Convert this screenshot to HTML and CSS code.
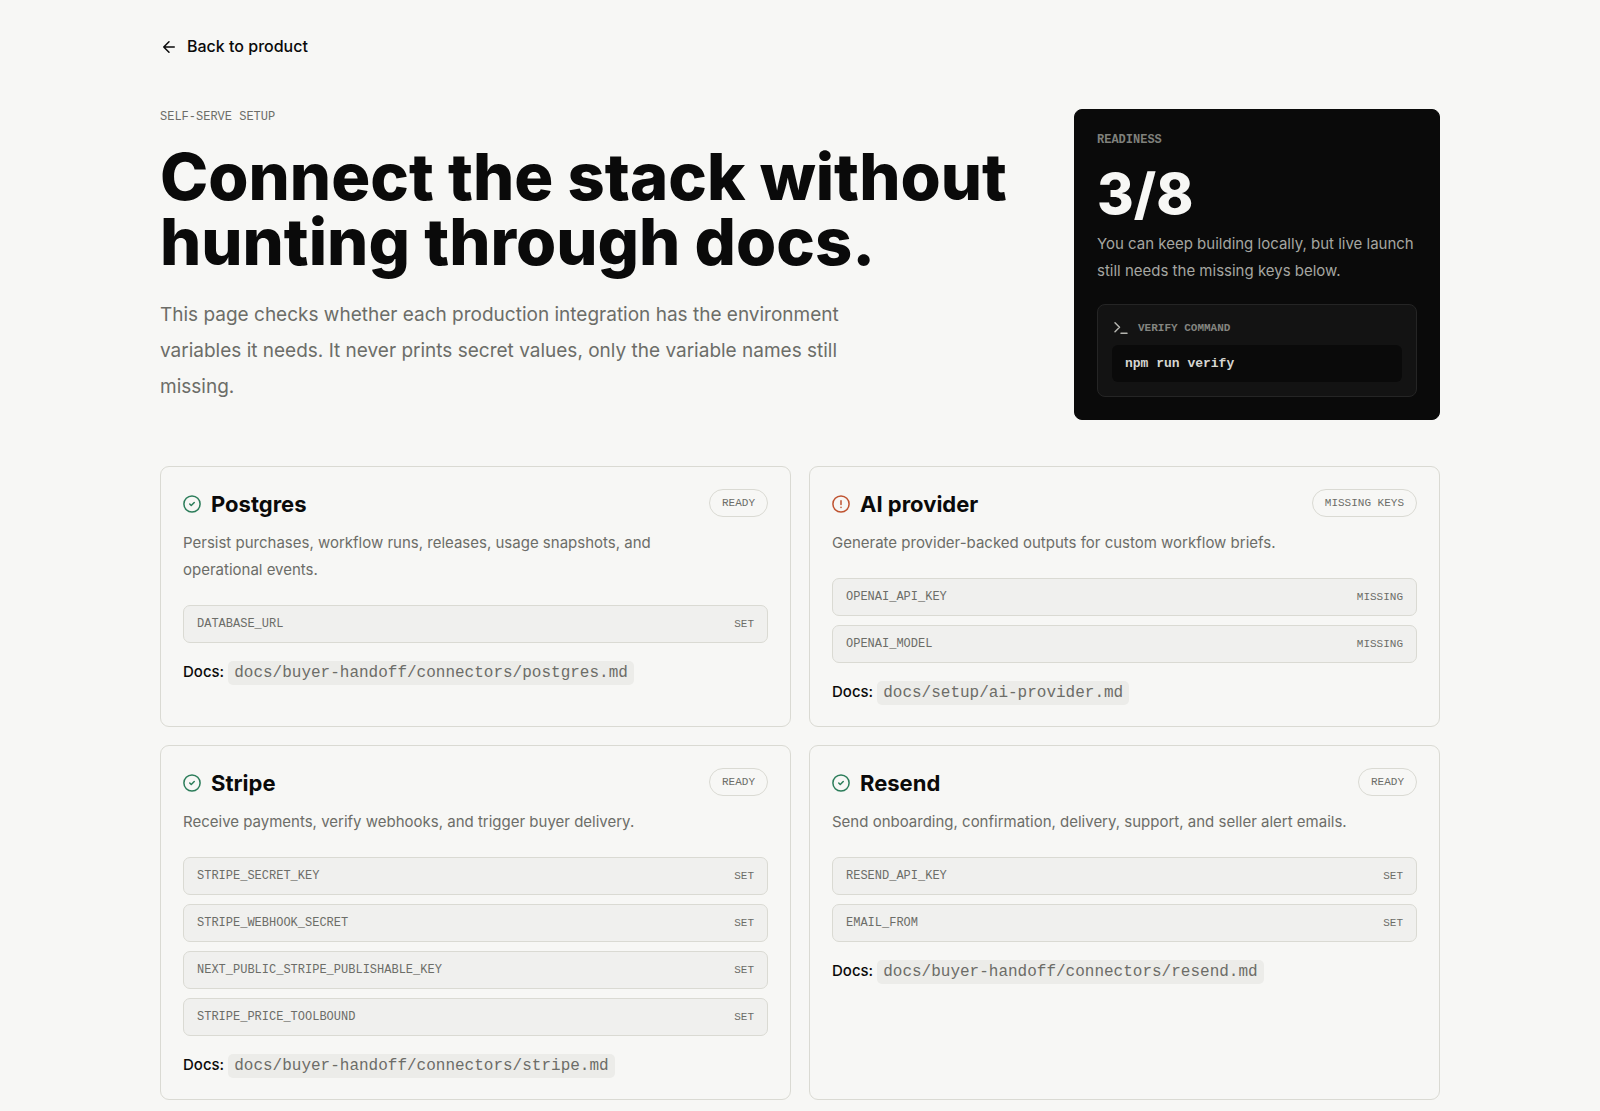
FILE: index.html
```html
<!DOCTYPE html>
<html lang="en">
<head>
<meta charset="utf-8">
<meta name="viewport" content="width=device-width, initial-scale=1">
<title>Self-serve setup</title>
<link rel="stylesheet" href="styles.css">
</head>
<body>
<svg class="sprite" aria-hidden="true">
  <symbol id="check" viewBox="0 0 24 24"><circle cx="12" cy="12" r="10.8"/><path d="m9 12 2 2 4-4"/></symbol>
  <symbol id="alert" viewBox="0 0 24 24"><circle cx="12" cy="12" r="10.8"/><path d="M12 7.5v5M12 16.4v.1"/></symbol>
</svg>
<main class="page">
  <a class="back" href="#">
    <svg class="back-icon" viewBox="0 0 24 24" aria-hidden="true"><path d="m12 19-7-7 7-7M19 12H5"/></svg>
    Back to product
  </a>

  <header class="hero">
    <div>
      <p class="eyebrow">SELF-SERVE SETUP</p>
      <h1 class="headline">Connect the stack without hunting through docs.</h1>
      <p class="lead">This page checks whether each production integration has the environment variables it needs. It never prints secret values, only the variable names still missing.</p>
    </div>
    <aside class="readiness">
      <p class="eyebrow readiness-label">READINESS</p>
      <p class="score">3/8</p>
      <p class="readiness-text">You can keep building locally, but live launch still needs the missing keys below.</p>
      <div class="verify">
        <p class="verify-label">
          <svg class="verify-icon" viewBox="0 0 24 24" aria-hidden="true"><path d="m4 17 6-6-6-6M12 19h8"/></svg>
          VERIFY COMMAND
        </p>
        <code class="command">npm run verify</code>
      </div>
    </aside>
  </header>

  <section class="grid" aria-label="Integrations">
    <article class="card">
      <div class="card-head">
        <h2 class="card-title"><svg class="state ready" aria-hidden="true"><use href="#check"/></svg>Postgres</h2>
        <span class="pill">READY</span>
      </div>
      <p class="desc">Persist purchases, workflow runs, releases, usage snapshots, and operational events.</p>
      <ul class="vars">
        <li class="var"><code>DATABASE_URL</code><span class="status">SET</span></li>
      </ul>
      <p class="docs">Docs: <code class="path">docs/buyer-handoff/connectors/postgres.md</code></p>
    </article>

    <article class="card">
      <div class="card-head">
        <h2 class="card-title"><svg class="state missing" aria-hidden="true"><use href="#alert"/></svg>AI provider</h2>
        <span class="pill">MISSING KEYS</span>
      </div>
      <p class="desc">Generate provider-backed outputs for custom workflow briefs.</p>
      <ul class="vars">
        <li class="var"><code>OPENAI_API_KEY</code><span class="status">MISSING</span></li>
        <li class="var"><code>OPENAI_MODEL</code><span class="status">MISSING</span></li>
      </ul>
      <p class="docs">Docs: <code class="path">docs/setup/ai-provider.md</code></p>
    </article>

    <article class="card">
      <div class="card-head">
        <h2 class="card-title"><svg class="state ready" aria-hidden="true"><use href="#check"/></svg>Stripe</h2>
        <span class="pill">READY</span>
      </div>
      <p class="desc">Receive payments, verify webhooks, and trigger buyer delivery.</p>
      <ul class="vars">
        <li class="var"><code>STRIPE_SECRET_KEY</code><span class="status">SET</span></li>
        <li class="var"><code>STRIPE_WEBHOOK_SECRET</code><span class="status">SET</span></li>
        <li class="var"><code>NEXT_PUBLIC_STRIPE_PUBLISHABLE_KEY</code><span class="status">SET</span></li>
        <li class="var"><code>STRIPE_PRICE_TOOLBOUND</code><span class="status">SET</span></li>
      </ul>
      <p class="docs">Docs: <code class="path">docs/buyer-handoff/connectors/stripe.md</code></p>
    </article>

    <article class="card">
      <div class="card-head">
        <h2 class="card-title"><svg class="state ready" aria-hidden="true"><use href="#check"/></svg>Resend</h2>
        <span class="pill">READY</span>
      </div>
      <p class="desc">Send onboarding, confirmation, delivery, support, and seller alert emails.</p>
      <ul class="vars">
        <li class="var"><code>RESEND_API_KEY</code><span class="status">SET</span></li>
        <li class="var"><code>EMAIL_FROM</code><span class="status">SET</span></li>
      </ul>
      <p class="docs">Docs: <code class="path">docs/buyer-handoff/connectors/resend.md</code></p>
    </article>
  </section>
</main>
</body>
</html>
```
FILE: styles.css
```css
:root {
  --bg: #f7f7f5;
  --ink: #0a0a0a;
  --muted: #6c6d68;
  --line: #dadad3;
  --fill: #f0f0ee;
  --sans: Inter, "Liberation Sans", sans-serif;
  --mono: "Liberation Mono", monospace;
}

* { box-sizing: border-box; }

body {
  margin: 0;
  background: var(--bg);
  color: var(--ink);
  font-family: var(--sans);
  font-size: 15px;
  line-height: 27px;
}

h1, h2, p, ul { margin: 0; padding: 0; }
ul { list-style: none; }
code { font-family: var(--mono); }
svg { fill: none; stroke: currentColor; stroke-width: 2; stroke-linecap: round; stroke-linejoin: round; }
.sprite { display: none; }

.page {
  max-width: 1328px;
  margin: 0 auto;
  padding: 33px 24px 11px;
}

.back {
  display: flex;
  align-items: center;
  gap: 9px;
  width: fit-content;
  color: var(--ink);
  font-size: 16px;
  font-weight: 500;
  text-decoration: none;
}
.back-icon { width: 18px; height: 18px; }

.hero {
  display: grid;
  grid-template-columns: minmax(0, 1fr) 366px;
  gap: 45px;
  margin-top: 49px;
}

.eyebrow {
  color: var(--muted);
  font-family: var(--mono);
  font-size: 12px;
  line-height: 16px;
}

.headline {
  margin-top: 19px;
  font-size: 65px;
  font-weight: 800;
  line-height: 65px;
}

.lead {
  max-width: 720px;
  margin-top: 23px;
  color: var(--muted);
  font-size: 19px;
  line-height: 36px;
}

.readiness {
  padding: 22px;
  border: 1px solid var(--ink);
  border-radius: 8px;
  background: var(--ink);
  color: var(--bg);
}
.readiness-label { color: #7f807b; font-weight: 700; }
.score {
  margin-top: 18px;
  font-size: 56px;
  font-weight: 800;
  line-height: 56px;
}
.readiness-text {
  margin-top: 8px;
  color: #a5a6a1;
}

.verify {
  margin-top: 20px;
  padding: 14px;
  border: 1px solid #252525;
  border-radius: 8px;
  background: #131313;
}
.verify-label {
  display: flex;
  align-items: center;
  gap: 8px;
  color: #848580;
  font-family: var(--mono);
  font-size: 11px;
  font-weight: 700;
  line-height: 16px;
}
.verify-icon { width: 18px; height: 18px; color: #b5b5b0; }
.command {
  display: block;
  margin-top: 8px;
  padding: 9px 13px;
  border-radius: 6px;
  background: var(--ink);
  color: #d6d6d2;
  font-size: 13px;
  font-weight: 700;
  line-height: 19px;
}

.grid {
  display: grid;
  grid-template-columns: repeat(2, minmax(0, 1fr));
  gap: 18px;
  margin-top: 46px;
}

.card {
  padding: 22px;
  border: 1px solid var(--line);
  border-radius: 9px;
}

.card-head {
  display: flex;
  align-items: flex-start;
  justify-content: space-between;
  gap: 16px;
}
.card-title {
  display: flex;
  align-items: center;
  gap: 10px;
  font-size: 22px;
  font-weight: 700;
  line-height: 30px;
}
.state { width: 18px; height: 18px; }
.ready { color: #2c7d5a; }
.missing { color: #bf5330; }

.pill {
  padding: 5px 12px;
  border: 1px solid var(--line);
  border-radius: 14px;
  color: var(--muted);
  font-family: var(--mono);
  font-size: 11px;
  line-height: 16px;
}

.desc {
  max-width: 520px;
  margin-top: 10px;
  color: var(--muted);
}

.vars {
  display: grid;
  gap: 9px;
  margin-top: 22px;
}
.var {
  display: flex;
  align-items: center;
  justify-content: space-between;
  gap: 16px;
  padding: 10px 13px;
  border: 1px solid var(--line);
  border-radius: 7px;
  background: var(--fill);
  color: var(--muted);
  font-size: 12px;
  line-height: 16px;
}
.status { font-family: var(--mono); font-size: 11px; }

.docs {
  margin-top: 16px;
  font-weight: 500;
  line-height: 25px;
}
.path {
  padding: 3px 6px;
  border-radius: 5px;
  background: #ecece9;
  color: var(--muted);
  font-size: 16px;
  font-weight: 400;
  line-height: 16px;
}

@media (max-width: 960px) {
  .hero, .grid { grid-template-columns: minmax(0, 1fr); }
}
```
